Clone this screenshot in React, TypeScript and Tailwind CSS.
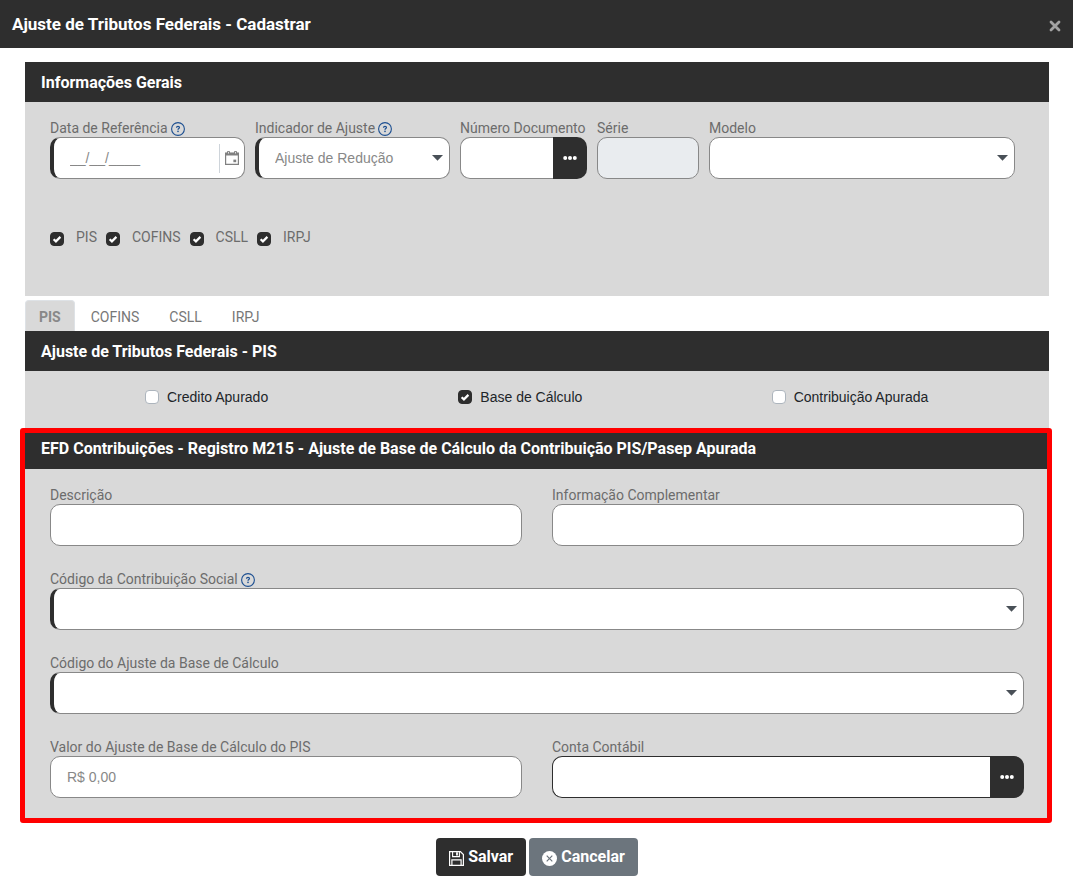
import { useId } from "react";
import type { ReactNode } from "react";

const INPUT_BASE =
  "h-[42px] w-full min-w-0 border px-4 font-['Liberation_Sans',Arial,sans-serif] text-sm text-[#888] placeholder:text-[#888] outline-none";
const INPUT = `${INPUT_BASE} rounded-[10px] border-[#888] bg-white`;

function HelpIcon() {
  return (
    <svg viewBox="0 0 14 14" className="size-[14px] shrink-0" fill="none" aria-hidden="true">
      <circle cx="7" cy="7" r="6.4" stroke="#1c4f91" strokeWidth="1.1" />
      <path d="M5.5 5.7c0-.9.6-1.4 1.5-1.4s1.5.5 1.5 1.3c0 1-1.5 1-1.5 2.2" stroke="#1c4f91" strokeWidth="1.2" />
      <circle cx="7" cy="9.4" r=".8" fill="#1c4f91" />
    </svg>
  );
}

function CalendarIcon() {
  return (
    <svg viewBox="0 0 14 14" className="size-[14px]" fill="none" aria-hidden="true">
      <path d="M.6 2.2h12.8v11.2H.6z" stroke="#808080" strokeWidth="1.2" />
      <path d="M.6 1.9h12.8v2.6H.6z" fill="#808080" />
      <rect x="2" y="0" width="3" height="3.6" rx="1" fill="#808080" />
      <rect x="9" y="0" width="3" height="3.6" rx="1" fill="#808080" />
      <path d="M3.5.9v1.6M10.5.9v1.6" stroke="#fff" strokeWidth=".8" />
      <rect x="8.4" y="8.6" width="2.8" height="2.6" fill="#808080" />
    </svg>
  );
}

function DotsIcon() {
  return (
    <svg viewBox="0 0 14 4" className="h-1 w-[14px]" fill="#fff" aria-hidden="true">
      <circle cx="2.2" cy="2" r="2" />
      <circle cx="7" cy="2" r="2" />
      <circle cx="11.8" cy="2" r="2" />
    </svg>
  );
}

function SaveIcon() {
  return (
    <svg viewBox="0 0 15 15" className="size-[15px]" fill="none" stroke="#fff" aria-hidden="true">
      <path d="M.6.6h10.8l3 3v10.8H.6z" strokeWidth="1.2" />
      <path d="M3.6.6v5h6.8v-5" strokeWidth="1.1" />
      <path d="M8 1.2v3.2" strokeWidth="1.8" />
      <path d="M2.9 14.2V8.9h9.2v5.3" strokeWidth="1.2" />
    </svg>
  );
}

function CancelIcon() {
  return (
    <svg viewBox="0 0 15 15" className="size-[15px]" fill="none" aria-hidden="true">
      <circle cx="7.5" cy="7.5" r="7.5" fill="#fff" />
      <path d="M4.7 4.7l5.6 5.6M10.3 4.7l-5.6 5.6" stroke="#6c757d" strokeWidth="1.2" />
    </svg>
  );
}

function CloseIcon() {
  return (
    <svg viewBox="0 0 12 12" className="size-3" aria-hidden="true">
      <path d="M2 2l8 8M10 2l-8 8" stroke="#a3a3a3" strokeWidth="2.8" strokeLinecap="round" />
    </svg>
  );
}

function Field({
  label,
  help,
  children,
}: {
  label: string;
  help?: boolean;
  children: (id: string) => ReactNode;
}) {
  const id = useId();
  return (
    <div className="flex min-w-0 flex-col">
      <div className="flex h-[17px] items-center gap-[3px] pb-[2px] text-sm leading-4 whitespace-nowrap text-[#6c6c6c]">
        <label htmlFor={id}>{label}</label>
        {help && (
          <span className="pt-[3px]">
            <HelpIcon />
          </span>
        )}
      </div>
      {children(id)}
    </div>
  );
}

function Select({ id, options, required }: { id: string; options: string[]; required?: boolean }) {
  return (
    <div className="relative">
      <select
        id={id}
        className={`${INPUT} appearance-none ${required ? "border-l-4 border-l-[#2e2e2e]" : ""}`}
      >
        {options.map((o) => (
          <option key={o}>{o}</option>
        ))}
      </select>
      <svg
        viewBox="0 0 11 6"
        className="pointer-events-none absolute top-[18px] right-[7px] h-[6px] w-[11px]"
        aria-hidden="true"
      >
        <path d="M0 0h11L5.500 5.800z" fill="#495057" />
      </svg>
    </div>
  );
}

function Lookup({ id, dark }: { id: string; dark?: boolean }) {
  return (
    <div className="flex">
      <input
        id={id}
        type="text"
        className={`${INPUT_BASE} rounded-l-[10px] border-r-0 bg-white ${dark ? "border-[#2e2e2e]" : "border-[#888]"}`}
      />
      <button
        type="button"
        aria-label="Pesquisar"
        className="flex w-[34px] shrink-0 items-center justify-center rounded-r-[10px] bg-[#2e2e2e]"
      >
        <DotsIcon />
      </button>
    </div>
  );
}

function Check({ label, checked, gap, text }: { label: string; checked?: boolean; gap: string; text: string }) {
  return (
    <label className={`flex items-center ${gap}`}>
      <span className="relative flex">
        <input
          type="checkbox"
          defaultChecked={checked}
          className="peer size-[14px] appearance-none rounded-[4px] border border-[#adb5bd] bg-white checked:border-[#2e2e2e] checked:bg-[#2e2e2e]"
        />
        <svg
          viewBox="0 0 14 14"
          className="pointer-events-none absolute inset-0 hidden size-[14px] peer-checked:block"
          fill="none"
          aria-hidden="true"
        >
          <path d="M3.600 7.300l2.300 2.100 4.500-4.500" stroke="#fff" strokeWidth="2.200" />
        </svg>
      </span>
      <span className={text}>{label}</span>
    </label>
  );
}

function PanelHeading({ children, size }: { children: ReactNode; size: string }) {
  return (
    <h2 className={`flex items-center bg-[#2e2e2e] px-4 text-base leading-5 font-bold text-white ${size}`}>
      {children}
    </h2>
  );
}

const TRIBUTOS = ["PIS", "COFINS", "CSLL", "IRPJ"];

export default function App() {
  return (
    <div className="min-h-screen bg-white font-[Roboto,sans-serif]">
      <header className="flex h-12 items-center justify-between bg-[#2e2e2e] px-3">
        <h1 className="text-[17px] leading-6 font-bold text-white">Ajuste de Tributos Federais - Cadastrar</h1>
        <button type="button" aria-label="Fechar" className="pt-1">
          <CloseIcon />
        </button>
      </header>

      <form className="pt-[14px] pr-6 pb-2 pl-[25px]">
        <section>
          <PanelHeading size="h-10 pt-[2px]">Informações Gerais</PanelHeading>
          <div className="bg-[#d9d9d9] pt-[18px] pr-[34px] pb-[47px] pl-[25px]">
            <div className="grid grid-cols-[195fr_195fr_127fr_102fr_306fr] gap-[10px]">
              <Field label="Data de Referência" help>
                {(id) => (
                  <div className="flex h-[42px] items-center rounded-[10px] border border-l-4 border-[#888] border-l-[#2e2e2e] bg-white">
                    <input
                      id={id}
                      type="text"
                      placeholder="__/__/____"
                      className="h-full min-w-0 flex-1 bg-transparent pl-4 font-['Liberation_Sans',Arial,sans-serif] text-sm text-[#888] outline-none placeholder:text-[#888]"
                    />
                    <button
                      type="button"
                      aria-label="Abrir calendário"
                      className="flex h-[29px] w-[25px] items-center justify-center border-l border-[#ced4da]"
                    >
                      <CalendarIcon />
                    </button>
                  </div>
                )}
              </Field>
              <Field label="Indicador de Ajuste" help>
                {(id) => <Select id={id} required options={["Ajuste de Redução", "Ajuste de Acréscimo"]} />}
              </Field>
              <Field label="Número Documento">{(id) => <Lookup id={id} />}</Field>
              <Field label="Série">
                {(id) => (
                  <input
                    id={id}
                    type="text"
                    disabled
                    className={`${INPUT_BASE} rounded-[10px] border-[#888] bg-[#e9ecef]`}
                  />
                )}
              </Field>
              <Field label="Modelo">{(id) => <Select id={id} options={[""]} />}</Field>
            </div>
            <div className="flex gap-[9px] pt-[50px]">
              {TRIBUTOS.map((t) => (
                <Check key={t} label={t} checked gap="gap-3" text="pb-1 text-sm leading-4 text-[#6c6c6c]" />
              ))}
            </div>
          </div>
        </section>

        <nav className="flex gap-[2px] pt-1" role="tablist">
          {TRIBUTOS.map((t, i) => (
            <button
              key={t}
              type="button"
              role="tab"
              aria-selected={i === 0}
              className={`h-[31px] rounded-t-[4px] border border-b-0 px-[13px] pt-[2px] text-sm leading-4 ${
                i === 0
                  ? "border-[#dee2e6] bg-[#d9d9d9] font-bold text-[#888]"
                  : "border-transparent text-[#777]"
              }`}
            >
              {t}
            </button>
          ))}
        </nav>

        <section>
          <PanelHeading size="h-10 pt-[2px]">Ajuste de Tributos Federais - PIS</PanelHeading>
          <div className="grid h-[57px] grid-cols-3 bg-[#d9d9d9] px-[42px] pt-[18px]">
            {["Credito Apurado", "Base de Cálculo", "Contribuição Apurada"].map((t, i) => (
              <div key={t} className="pl-[78px]">
                <Check
                  label={t}
                  checked={i === 1}
                  gap="gap-2"
                  text="font-['Liberation_Sans',Arial,sans-serif] text-sm leading-4 text-[#212529]"
                />
              </div>
            ))}
          </div>
        </section>

        <section className="-mr-[3px] -ml-[5px] rounded-[3px] border-5 border-[#ff0000]">
          <PanelHeading size="h-9 pb-[5px]">
            EFD Contribuições - Registro M215 - Ajuste de Base de Cálculo da Contribuição PIS/Pasep Apurada
          </PanelHeading>
          <div className="grid grid-cols-2 gap-x-[30px] gap-y-[25px] bg-[#d9d9d9] pt-[18px] pr-[23px] pb-5 pl-[25px]">
            <Field label="Descrição">{(id) => <input id={id} type="text" className={INPUT} />}</Field>
            <Field label="Informação Complementar">
              {(id) => <input id={id} type="text" className={INPUT} />}
            </Field>
            <div className="col-span-2">
              <Field label="Código da Contribuição Social" help>
                {(id) => <Select id={id} required options={[""]} />}
              </Field>
            </div>
            <div className="col-span-2">
              <Field label="Código do Ajuste da Base de Cálculo">
                {(id) => <Select id={id} required options={[""]} />}
              </Field>
            </div>
            <Field label="Valor do Ajuste de Base de Cálculo do PIS">
              {(id) => <input id={id} type="text" placeholder="R$ 0,00" className={INPUT} />}
            </Field>
            <Field label="Conta Contábil">{(id) => <Lookup id={id} dark />}</Field>
          </div>
        </section>

        <div className="flex justify-center gap-[3px] pt-[15px]">
          <button
            type="button"
            className="flex h-[38px] items-center gap-1 rounded-[4px] bg-[#2e2e2e] px-[13px] text-base font-bold text-white"
          >
            <span className="pt-[2px]">
              <SaveIcon />
            </span>
            Salvar
          </button>
          <button
            type="button"
            className="flex h-[38px] items-center gap-1 rounded-[4px] bg-[#6c757d] px-[13px] text-base font-bold text-white"
          >
            <span className="pt-[2px]">
              <CancelIcon />
            </span>
            Cancelar
          </button>
        </div>
      </form>
    </div>
  );
}
